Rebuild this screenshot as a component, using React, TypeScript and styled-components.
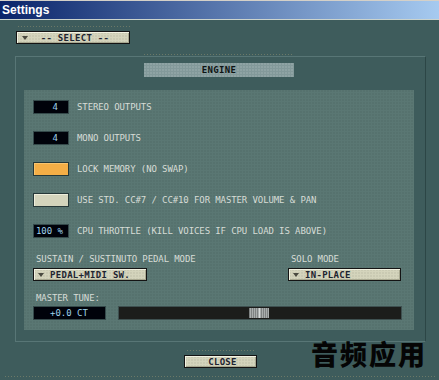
import React from 'react';
import styled, { createGlobalStyle } from 'styled-components';

const PIXEL = `"DejaVu Sans Mono", "Liberation Mono", monospace`;

const GlobalStyle = createGlobalStyle`
  html, body {
    margin: 0;
    padding: 0;
    background: #3e5c5c;
  }
  body {
    width: 439px;
    height: 380px;
    overflow: hidden;
  }
`;

const Window = styled.div`
  position: relative;
  width: 439px;
  height: 380px;
  display: flex;
  flex-direction: column;
  background: #3e5c5c;
  overflow: hidden;
`;

const TitleBar = styled.div`
  height: 18px;
  border-top: 1px solid #d4d0c8;
  border-bottom: 1px solid #cbd3cd;
  background: linear-gradient(to right, #0a246a 0%, #a6caf0 100%);
  display: flex;
  align-items: center;
  padding-left: 2px;
  color: #fff;
  font: bold 12px "Liberation Sans", Arial, sans-serif;
`;

const Body = styled.div`
  display: flex;
  flex-direction: column;
  padding: 6px 13px 0 15px;
`;

const Dots = styled.div<{ $w: number; $left?: number }>`
  height: 1px;
  width: ${p => p.$w}px;
  margin-left: ${p => p.$left ?? 0}px;
  background-image: repeating-linear-gradient(
    to right,
    #76806a 0 1px,
    transparent 1px 3px
  );
  opacity: 0.8;
`;

const SelectBlock = styled.div`
  display: flex;
  flex-direction: column;
  gap: 4px;
  margin-left: 1px;
`;

const BeigeButton = styled.div<{ $w: number; $center?: boolean }>`
  box-sizing: border-box;
  width: ${p => p.$w}px;
  height: 13px;
  border: 1px solid #141414;
  box-shadow: inset 1px 1px 0 #f2f2e2, inset -1px -1px 0 #a8a890;
  background-color: #d4d4bc;
  background-image: radial-gradient(circle at 1px 1px, rgba(0, 0, 0, 0.05) 0.7px, transparent 0.8px);
  background-size: 3px 3px;
  display: flex;
  align-items: center;
  justify-content: ${p => (p.$center ? 'center' : 'flex-start')};
  gap: 6px;
  padding-left: 4px;
  color: #1e2430;
  font: bold 9px ${PIXEL};
  letter-spacing: 0.3px;
  position: relative;
`;

const Arrow = styled.span`
  width: 0;
  height: 0;
  border-left: 3px solid transparent;
  border-right: 3px solid transparent;
  border-top: 4px solid #4a4a40;
`;

const SelectArrow = styled(Arrow)`
  position: absolute;
  left: 5px;
  top: 4px;
`;

const Panel = styled.div`
  margin-top: 1px;
  height: 286px;
  box-sizing: border-box;
  border: 1px solid;
  border-color: #587676 #2c4646 #587676 #587676;
  display: flex;
  flex-direction: column;
`;

const Tab = styled.div`
  margin: 6px 0 0 128px;
  width: 150px;
  height: 14px;
  background-color: #83999a;
  background-image: radial-gradient(circle at 1px 1px, rgba(255, 255, 255, 0.1) 0.7px, transparent 0.8px);
  background-size: 3px 3px;
  display: flex;
  align-items: center;
  justify-content: center;
  color: #0e1414;
  font: bold 9px ${PIXEL};
  letter-spacing: 0.3px;
`;

const Inner = styled.div`
  margin: 13px 11px 0 8px;
  height: 240px;
  box-sizing: border-box;
  padding: 10px 12px 10px 9px;
  background-color: #5a7773;
  background-image: radial-gradient(circle at 1px 1px, rgba(0, 0, 0, 0.045) 0.7px, transparent 0.8px);
  background-size: 3px 3px;
  display: flex;
  flex-direction: column;
`;

const Rows = styled.div`
  display: flex;
  flex-direction: column;
  gap: 17px;
`;

const Row = styled.div`
  display: flex;
  align-items: center;
  gap: 8px;
  height: 14px;
`;

const Label = styled.span`
  color: #d6dcd6;
  font: 9px ${PIXEL};
  letter-spacing: -0.1px;
  white-space: nowrap;
`;

const ValueBox = styled.div<{ $w: number; $pr?: number; $pl?: number; $left?: boolean }>`
  box-sizing: border-box;
  width: ${p => p.$w}px;
  height: 14px;
  background: #00020a;
  border: 1px solid #34494a;
  display: flex;
  align-items: center;
  justify-content: ${p => (p.$left ? 'flex-start' : 'flex-end')};
  padding-right: ${p => p.$pr ?? 0}px;
  padding-left: ${p => p.$pl ?? 0}px;
  color: #9fd2ea;
  font: 9px ${PIXEL};
  white-space: nowrap;
`;

const Toggle = styled.div<{ $on?: boolean }>`
  box-sizing: border-box;
  width: 36px;
  height: 14px;
  border: 1px solid #263838;
  background: ${p => (p.$on ? '#f4ae46' : '#d4d4bc')};
  box-shadow: inset 1px 1px 0 ${p => (p.$on ? '#f8c46e' : '#eeeedc')};
`;

const FieldLabel = styled(Label)`
  display: block;
  height: 10px;
  line-height: 10px;
  padding-left: 3px;
`;

const ModeRow = styled.div`
  display: flex;
  justify-content: space-between;
  margin-top: 16px;
`;

const ModeCol = styled.div<{ $w: number }>`
  width: ${p => p.$w}px;
  display: flex;
  flex-direction: column;
  gap: 4px;
`;

const TuneBlock = styled.div`
  margin-top: 12px;
  display: flex;
  flex-direction: column;
  gap: 3px;
`;

const TuneRow = styled.div`
  display: flex;
  gap: 12px;
  height: 14px;
`;

const Track = styled.div`
  flex: 1;
  box-sizing: border-box;
  height: 14px;
  background: #1c1d1b;
  border: 1px solid #3e5050;
  position: relative;
`;

const Thumb = styled.div`
  position: absolute;
  left: 130px;
  top: 1px;
  width: 20px;
  height: 10px;
  background: repeating-linear-gradient(
    to right,
    #7e8282 0 1px,
    #a9adad 1px 2px
  );
  &::after {
    content: '';
    position: absolute;
    left: 10px;
    top: 0;
    width: 1px;
    height: 10px;
    background: #d8dcdc;
  }
`;

const Footer = styled.div`
  display: flex;
  flex-direction: column;
  align-items: center;
  gap: 4px;
  margin-top: 8px;
`;

const BottomDots = styled(Dots)`
  margin: auto 4px 3px 5px;
`;

const Watermark = styled.div`
  position: absolute;
  right: 12px;
  bottom: 12px;
  color: #050505;
  font: 900 27px "Noto Sans CJK SC", sans-serif;
  letter-spacing: 2px;
  line-height: 28px;
`;

export default function App() {
  return (
    <Window>
      <GlobalStyle />
      <TitleBar>Settings</TitleBar>
      <Body>
        <SelectBlock>
          <Dots $w={112} $left={2} />
          <BeigeButton $w={114} $center>
            <SelectArrow />
            -- SELECT --
          </BeigeButton>
        </SelectBlock>

        <Dots $w={150} $left={129} style={{ marginTop: 10 }} />
        <Panel>
          <Tab>ENGINE</Tab>
          <Inner>
            <Rows>
              <Row>
                <ValueBox $w={36} $pr={10}>4</ValueBox>
                <Label>STEREO OUTPUTS</Label>
              </Row>
              <Row>
                <ValueBox $w={36} $pr={10}>4</ValueBox>
                <Label>MONO OUTPUTS</Label>
              </Row>
              <Row>
                <Toggle $on />
                <Label>LOCK MEMORY (NO SWAP)</Label>
              </Row>
              <Row>
                <Toggle />
                <Label>USE STD. CC#7 / CC#10 FOR MASTER VOLUME &amp; PAN</Label>
              </Row>
              <Row>
                <ValueBox $w={36} $pr={5}>100 %</ValueBox>
                <Label>CPU THROTTLE (KILL VOICES IF CPU LOAD IS ABOVE)</Label>
              </Row>
            </Rows>

            <ModeRow>
              <ModeCol $w={114}>
                <FieldLabel>SUSTAIN / SUSTINUTO PEDAL MODE</FieldLabel>
                <BeigeButton $w={114}>
                  <Arrow />
                  PEDAL+MIDI SW.
                </BeigeButton>
              </ModeCol>
              <ModeCol $w={114}>
                <FieldLabel>SOLO MODE</FieldLabel>
                <BeigeButton $w={113}>
                  <Arrow />
                  IN-PLACE
                </BeigeButton>
              </ModeCol>
            </ModeRow>

            <TuneBlock>
              <FieldLabel>MASTER TUNE:</FieldLabel>
              <TuneRow>
                <ValueBox $w={73} $pl={16} $left>+0.0 CT</ValueBox>
                <Track>
                  <Thumb />
                </Track>
              </TuneRow>
            </TuneBlock>
          </Inner>
        </Panel>

        <Footer>
          <Dots $w={68} />
          <BeigeButton $w={73} $center>CLOSE</BeigeButton>
        </Footer>
      </Body>
      <BottomDots $w={430} />
      <Watermark>音频应用</Watermark>
    </Window>
  );
}
